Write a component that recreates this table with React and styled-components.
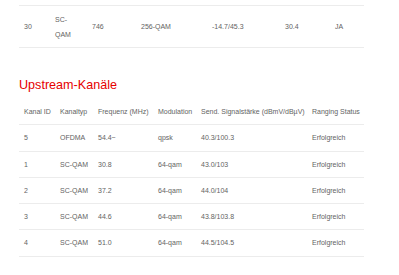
import React from 'react';
import styled, { createGlobalStyle } from 'styled-components';

const GlobalStyle = createGlobalStyle`
  html, body {
    margin: 0;
    padding: 0;
    background: #ffffff;
  }
  body {
    font-family: "Liberation Sans", Arial, sans-serif;
    color: #555555;
  }
`;

const downstreamCols = [31, 37, 49, 71, 73, 50, 34];
const upstreamCols = [36, 38, 60, 43, 111, 57];

const downstreamRows = [['30', 'SC-QAM', '746', '256-QAM', '-14.7/45.3', '30.4', 'JA']];

const upstreamHead = [
  'Kanal ID',
  'Kanaltyp',
  'Frequenz (MHz)',
  'Modulation',
  'Send. Signalstärke (dBmV/dBµV)',
  'Ranging Status',
];

const upstreamRows = [
  ['5', 'OFDMA', '54.4~', 'qpsk', '40.3/100.3', 'Erfolgreich'],
  ['1', 'SC-QAM', '30.8', '64-qam', '43.0/103', 'Erfolgreich'],
  ['2', 'SC-QAM', '37.2', '64-qam', '44.0/104', 'Erfolgreich'],
  ['3', 'SC-QAM', '44.6', '64-qam', '43.8/103.8', 'Erfolgreich'],
  ['4', 'SC-QAM', '51.0', '64-qam', '44.5/104.5', 'Erfolgreich'],
];

const Page = styled.div`
  width: 345px;
  padding: 5px 35px 0 19px;
`;

const Table = styled.table`
  width: 345px;
  table-layout: fixed;
  border-collapse: collapse;
  font-size: 7px;
  line-height: 15px;
  color: #636363;
`;

const Row = styled.tr`
  border-top: ${(p) => (p.$topLine ? '1px solid #ececec' : 'none')};
  border-bottom: 1px solid #ececec;
`;

const Cell = styled.td`
  padding: ${(p) => (p.$tall ? '5.5px' : '5.125px')} 5px;
  text-align: left;
  vertical-align: middle;
  white-space: ${(p) => (p.$wrap ? 'normal' : 'nowrap')};
  font-weight: normal;
`;

const HeadCell = styled(Cell).attrs({ as: 'th' })`
  color: #636363;
`;

const Heading = styled.h2`
  margin: 29px 0 6px;
  font-size: 12.6px;
  line-height: 16px;
  font-weight: normal;
  color: #e60000;
`;

const ColGroup = ({ widths }) => (
  <colgroup>
    {widths.map((w, i) => (
      <col key={i} style={{ width: w }} />
    ))}
  </colgroup>
);

export default function App() {
  return (
    <>
      <GlobalStyle />
      <Page>
        {/* letzte Zeile der Downstream-Tabelle */}
        <Table>
          <ColGroup widths={downstreamCols} />
          <tbody>
            {downstreamRows.map((r, i) => (
              <Row key={i} $topLine>
                {r.map((c, j) => (
                  <Cell key={j} $tall $wrap>
                    {c}
                  </Cell>
                ))}
              </Row>
            ))}
          </tbody>
        </Table>

        <Heading>Upstream-Kanäle</Heading>

        <Table>
          <ColGroup widths={upstreamCols} />
          <thead>
            <Row>
              {upstreamHead.map((h) => (
                <HeadCell key={h}>{h}</HeadCell>
              ))}
            </Row>
          </thead>
          <tbody>
            {upstreamRows.map((r, i) => (
              <Row key={i}>
                {r.map((c, j) => (
                  <Cell key={j}>{c}</Cell>
                ))}
              </Row>
            ))}
          </tbody>
        </Table>
      </Page>
    </>
  );
}
